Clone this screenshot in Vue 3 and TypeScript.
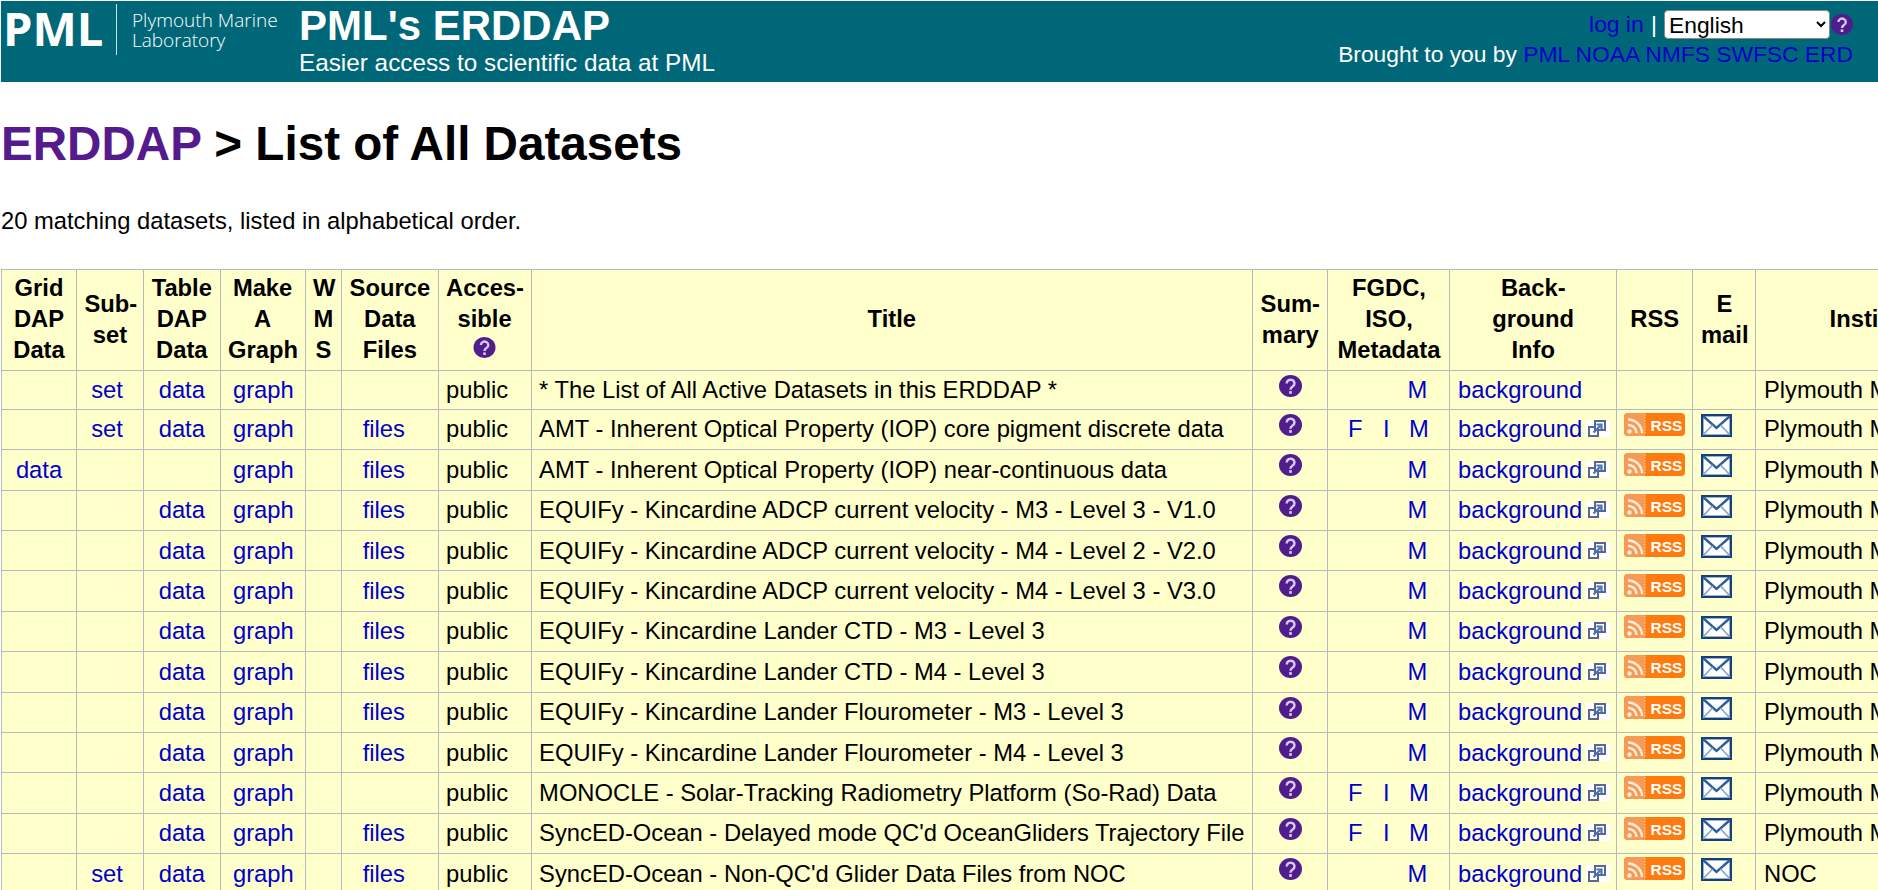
<script setup lang="ts">
interface Row {
  grid?: boolean
  subset?: boolean
  table?: boolean
  files?: boolean
  title: string
  fi?: boolean
  icons?: boolean
  institution: string
}

const pml = 'Plymouth Marine Laboratory'

const rows: Row[] = [
  { subset: true, table: true, title: '* The List of All Active Datasets in this ERDDAP *', institution: pml },
  { subset: true, table: true, files: true, title: 'AMT - Inherent Optical Property (IOP) core pigment discrete data', fi: true, icons: true, institution: pml },
  { grid: true, files: true, title: 'AMT - Inherent Optical Property (IOP) near-continuous data', icons: true, institution: pml },
  { table: true, files: true, title: 'EQUIFy - Kincardine ADCP current velocity - M3 - Level 3 - V1.0', icons: true, institution: pml },
  { table: true, files: true, title: 'EQUIFy - Kincardine ADCP current velocity - M4 - Level 2 - V2.0', icons: true, institution: pml },
  { table: true, files: true, title: 'EQUIFy - Kincardine ADCP current velocity - M4 - Level 3 - V3.0', icons: true, institution: pml },
  { table: true, files: true, title: 'EQUIFy - Kincardine Lander CTD - M3 - Level 3', icons: true, institution: pml },
  { table: true, files: true, title: 'EQUIFy - Kincardine Lander CTD - M4 - Level 3', icons: true, institution: pml },
  { table: true, files: true, title: 'EQUIFy - Kincardine Lander Flourometer - M3 - Level 3', icons: true, institution: pml },
  { table: true, files: true, title: 'EQUIFy - Kincardine Lander Flourometer - M4 - Level 3', icons: true, institution: pml },
  { table: true, title: 'MONOCLE - Solar-Tracking Radiometry Platform (So-Rad) Data', fi: true, icons: true, institution: pml },
  { table: true, files: true, title: "SyncED-Ocean - Delayed mode QC'd OceanGliders Trajectory File", fi: true, icons: true, institution: pml },
  { subset: true, table: true, files: true, title: "SyncED-Ocean - Non-QC'd Glider Data Files from NOC", icons: true, institution: 'NOC' },
]

const sponsors = ['PML', 'NOAA', 'NMFS', 'SWFSC', 'ERD']
</script>

<template>
  <div class="page">
    <header class="banner">
      <div class="logo">
        <span class="logo-mark">PML</span>
        <span class="logo-rule"></span>
        <span class="logo-name">Plymouth Marine<br />Laboratory</span>
      </div>
      <div class="banner-title">
        <div class="site-name">PML's ERDDAP</div>
        <div class="site-tag">Easier access to scientific data at PML</div>
      </div>
      <div class="banner-right">
        <div class="lang-row">
          <a href="#">log in</a>
          <span class="pipe">|</span>
          <select class="lang"><option>English</option></select>
          <svg class="help lang-help" viewBox="0 0 22 21">
            <ellipse cx="11" cy="10.5" rx="11" ry="10.5" fill="#4f1d8c" />
            <path d="M7.4 8a3.7 3.5 0 1 1 5.6 3c-1.4.9-2 1.5-2 3" fill="none" stroke="#d8c8ee" stroke-width="2.4" />
            <rect x="9.7" y="15.4" width="2.6" height="2.6" fill="#d8c8ee" />
          </svg>
        </div>
        <div class="brought">
          Brought to you by
          <template v-for="s in sponsors" :key="s"><a href="#">{{ s }}</a>{{ ' ' }}</template>
        </div>
      </div>
    </header>

    <h1 class="heading"><a href="#">ERDDAP</a> &gt; List of All Datasets</h1>

    <p class="count">20 matching datasets, listed in alphabetical order.</p>

    <table class="datasets">
      <colgroup>
        <col class="c-grid" />
        <col class="c-sub" />
        <col class="c-table" />
        <col class="c-graph" />
        <col class="c-wms" />
        <col class="c-files" />
        <col class="c-access" />
        <col class="c-title" />
        <col class="c-summary" />
        <col class="c-meta" />
        <col class="c-bg" />
        <col class="c-rss" />
        <col class="c-mail" />
        <col class="c-inst" />
      </colgroup>
      <thead>
        <tr>
          <th>Grid<br />DAP<br />Data</th>
          <th>Sub-<br />set</th>
          <th>Table<br />DAP<br />Data</th>
          <th>Make<br />A<br />Graph</th>
          <th>W<br />M<br />S</th>
          <th>Source<br />Data<br />Files</th>
          <th>
            Acces-<br />sible
            <svg class="help th-help" viewBox="0 0 22 21">
              <ellipse cx="11" cy="10.5" rx="11" ry="10.5" fill="#4f1d8c" />
              <path d="M7.4 8a3.7 3.5 0 1 1 5.6 3c-1.4.9-2 1.5-2 3" fill="none" stroke="#d8c8ee" stroke-width="2.4" />
              <rect x="9.7" y="15.4" width="2.6" height="2.6" fill="#d8c8ee" />
            </svg>
          </th>
          <th>Title</th>
          <th>Sum-<br />mary</th>
          <th>FGDC,<br />ISO,<br />Metadata</th>
          <th>Back-<br />ground<br />Info</th>
          <th>RSS</th>
          <th>E<br />mail</th>
          <th>Institution</th>
        </tr>
      </thead>
      <tbody>
        <tr v-for="row in rows" :key="row.title" :class="{ plain: !row.icons }">
          <td class="mid"><a v-if="row.grid" href="#">data</a></td>
          <td class="mid"><a v-if="row.subset" class="shift-set" href="#">set</a></td>
          <td class="mid"><a v-if="row.table" href="#">data</a></td>
          <td class="mid"><a class="shift-graph" href="#">graph</a></td>
          <td></td>
          <td class="mid"><a v-if="row.files" class="shift-files" href="#">files</a></td>
          <td>public</td>
          <td>{{ row.title }}</td>
          <td class="top-cell">
            <svg class="help row-help" viewBox="0 0 22 21">
              <ellipse cx="11" cy="10.5" rx="11" ry="10.5" fill="#4f1d8c" />
              <path d="M7.4 8a3.7 3.5 0 1 1 5.6 3c-1.4.9-2 1.5-2 3" fill="none" stroke="#d8c8ee" stroke-width="2.4" />
              <rect x="9.7" y="15.4" width="2.6" height="2.6" fill="#d8c8ee" />
            </svg>
          </td>
          <td>
            <div class="meta">
              <a v-if="row.fi" class="meta-f" href="#">F</a>
              <a v-if="row.fi" class="meta-i" href="#">I</a>
              <a class="meta-m" :class="{ solo: !row.fi }" href="#">M</a>
            </div>
          </td>
          <td>
            <a href="#">background</a><span v-if="row.icons" class="ext">
              <svg viewBox="0 0 18 17" width="18" height="17">
                <rect x="1" y="7" width="9" height="9" fill="#fff" stroke="#5a6690" stroke-width="2" />
                <rect x="7" y="1" width="10" height="9" fill="#fff" stroke="#5a6690" stroke-width="2" />
                <path d="M5.500 12.500l6.500-6.500M8.500 4.500h5v5" fill="none" stroke="#4a72b8" stroke-width="2.200" />
              </svg>
            </span>
          </td>
          <td class="top-cell">
            <svg v-if="row.icons" class="rss" viewBox="0 0 61 23">
              <rect width="61" height="23" rx="4" fill="#ff7b0f" />
              <path d="M4 0h17v23H4a4 4 0 0 1-4-4V4a4 4 0 0 1 4-4z" fill="#f79a55" />
              <path d="M21 1v21" stroke="#fcd3ad" stroke-width="1" stroke-dasharray="1.5 1.5" />
              <circle cx="5.500" cy="18.500" r="2.200" fill="#ffeedd" />
              <path d="M4 12a8 8 0 0 1 8.500 8M4 6.500a14 14 0 0 1 14 13.500" fill="none" stroke="#ffeedd" stroke-width="2.400" />
              <text x="26.500" y="18" class="rss-text">RSS</text>
            </svg>
          </td>
          <td class="top-cell">
            <svg v-if="row.icons" class="mail" viewBox="0 0 31 23">
              <rect x="1.200" y="1.200" width="28.600" height="20.600" fill="#fff" stroke="#123f7e" stroke-width="2.400" />
              <path d="M2 2l13.500 12L29 2" fill="none" stroke="#2f5f9a" stroke-width="2.400" />
              <path d="M2 21l9.500-10M29 21l-9.500-10" fill="none" stroke="#7fa3c9" stroke-width="1.600" />
            </svg>
          </td>
          <td>{{ row.institution }}</td>
        </tr>
      </tbody>
    </table>
  </div>
</template>

<style scoped>
.page {
  padding: 1px 0 0 1px;
  width: 1877px;
  height: 889px;
  overflow: hidden;
  font-family: "Liberation Sans", Arial, sans-serif;
  font-size: 23.75px;
  color: #000;
}

a {
  color: #0000cc;
  text-decoration: none;
}

.banner {
  display: flex;
  height: 81px;
  background: #006778;
  color: #fff;
}

.logo {
  display: flex;
  align-items: flex-start;
  width: 298px;
  flex: none;
  font-family: "Open Sans", sans-serif;
}

.logo-mark {
  width: 115px;
  padding-left: 2px;
  box-sizing: border-box;
  font-size: 47px;
  font-weight: 700;
  line-height: 55px;
}

.logo-rule {
  width: 1px;
  height: 51px;
  margin-top: 3px;
  background: #cfe3e6;
}

.logo-name {
  margin: 9px 0 0 15px;
  font-size: 19px;
  font-weight: 300;
  line-height: 20px;
  white-space: nowrap;
}

.site-name {
  margin-top: 2px;
  font-size: 42px;
  font-weight: bold;
  line-height: 46px;
}

.site-tag {
  font-size: 24.3px;
  line-height: 28px;
}

.banner-right {
  flex: 1;
  padding-right: 25px;
  font-size: 22.8px;
  text-align: right;
}

.lang-row {
  display: flex;
  justify-content: flex-end;
  align-items: center;
  height: 33px;
  margin-top: 7px;
}

.pipe {
  margin: 0 7px 0 7.5px;
}

.lang {
  width: 166px;
  height: 29px;
  padding: 0;
  border: 1px solid #8a8a8a;
  border-radius: 4px;
  background: #fff;
  font-family: inherit;
  font-size: 22.8px;
}

.help {
  display: block;
  width: 22px;
  height: 21px;
  flex: none;
}

.lang-help {
  margin-left: 1px;
}

.brought {
  line-height: 26.500px;
  white-space: nowrap;
}

.heading {
  margin: 34px 0 0;
  font-size: 47.6px;
  font-weight: bold;
  line-height: 55px;
}

.heading a {
  color: #551a8b;
}

.count {
  margin: 35.5px 0 0;
  line-height: 28px;
}

.datasets {
  margin-top: 34px;
  width: 2017px;
  table-layout: fixed;
  border-collapse: collapse;
  background: #ffc;
  line-height: 28px;
}

.datasets th,
.datasets td {
  padding: 0 7.5px;
  border: 1px solid #b8b8c0;
  white-space: nowrap;
}

.datasets th {
  height: 100px;
  text-align: center;
  font-weight: bold;
  line-height: 30.8px;
}

.th-help {
  margin: 2px auto 8px;
  width: 23px;
}

.datasets td {
  height: 39.4px;
}

.datasets tr.plain td {
  height: 38.3px;
}

.c-grid { width: 75px; }
.c-sub { width: 67px; }
.c-table { width: 76.6px; }
.c-graph { width: 85px; }
.c-wms { width: 36.5px; }
.c-files { width: 96.5px; }
.c-access { width: 93px; }
.c-title { width: 721.4px; }
.c-summary { width: 75.5px; }
.c-meta { width: 122px; }
.c-bg { width: 166.500px; }
.c-rss { width: 76.5px; }
.c-mail { width: 63px; }
.c-inst { width: 262px; }

.mid {
  text-align: center;
}

.shift-set {
  margin-right: 6px;
}

.shift-files {
  margin-right: 12px;
}

.shift-graph {
  margin-left: 1.5px;
}

.top-cell {
  vertical-align: top;
}

.row-help {
  width: 23px;
  height: 22px;
  margin: 4px auto 0;
}

.meta {
  display: grid;
  grid-template-columns: 35px 26px auto;
  padding-left: 12px;
}

.meta-f { grid-column: 1; }
.meta-i { grid-column: 2; }
.meta-m { grid-column: 3; }

.meta-m.solo {
  margin-left: -1.5px;
}

.ext {
  display: inline-block;
  width: 24px;
  height: 17px;
  margin-left: 4px;
  padding-left: 2px;
  box-sizing: border-box;
  background: #fff;
  vertical-align: 0;
}

.ext svg {
  display: block;
}

.rss {
  display: block;
  width: 61px;
  height: 23px;
  margin-top: 3px;
}

.rss-text {
  font-family: "Liberation Sans", Arial, sans-serif;
  font-size: 15.500px;
  font-weight: bold;
  fill: #fff;
}

.mail {
  display: block;
  width: 31px;
  height: 23px;
  margin-top: 4px;
}
</style>

<style>
html,
body {
  margin: 0;
  overflow: hidden;
}
</style>
